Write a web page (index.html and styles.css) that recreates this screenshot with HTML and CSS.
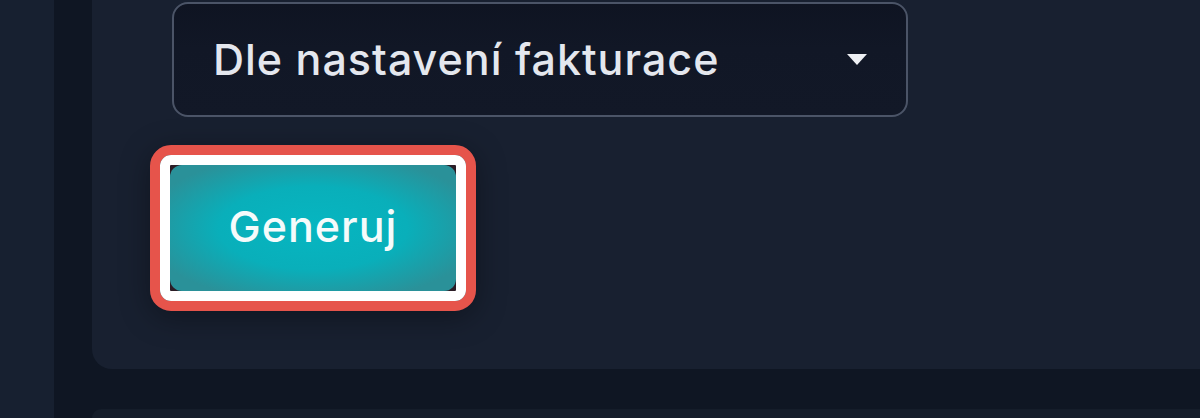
FILE: index.html
```html
<!DOCTYPE html>
<html lang="cs">
<head>
<meta charset="utf-8">
<title>Generuj</title>
<link rel="stylesheet" href="styles.css">
</head>
<body>
<div class="layout">
  <aside class="sidebar"></aside>
  <main class="main">
    <section class="card">
      <div class="select">
        <span class="select-value">Dle nastavení fakturace</span>
        <span class="caret"></span>
      </div>
      <div class="highlight">
        <div class="highlight-inner">
          <button class="btn-generate" type="button">Generuj</button>
        </div>
      </div>
    </section>
    <section class="card card-next"></section>
  </main>
</div>
</body>
</html>
```

FILE: styles.css
```css
* { box-sizing: border-box; }
html, body { margin: 0; padding: 0; height: 100%; }
body {
  background: #0f1623;
  font-family: Inter, "Noto Sans", "Liberation Sans", sans-serif;
  overflow: hidden;
}
.layout {
  display: flex;
  height: 418px;
}
.sidebar {
  width: 54px;
  flex: 0 0 54px;
  background: #172030;
}
.main {
  flex: 1;
  display: flex;
  flex-direction: column;
  gap: 40px;
  padding-left: 38px;
  background: #0f1623;
}
.card {
  background: #182030;
  border-radius: 0 0 0 20px;
  padding: 2px 0 58px 80px;
  display: flex;
  flex-direction: column;
  align-items: flex-start;
  gap: 28px;
}
.card-next {
  flex: 1;
  background: #151d2a;
  border-radius: 20px 0 0 0;
  padding: 0;
}
.select {
  width: 736px;
  height: 115px;
  border: 2px solid #4b5467;
  border-radius: 16px;
  background: linear-gradient(180deg, #0f1422 0%, #111726 40%, #121827 100%);
  display: flex;
  align-items: center;
  justify-content: space-between;
  padding: 0 39px 2px 39px;
}
.select-value {
  color: #e4e7ee;
  font-size: 43px;
  font-weight: 500;
  letter-spacing: 1px;
}
.caret {
  width: 0;
  height: 0;
  border-left: 10px solid transparent;
  border-right: 10px solid transparent;
  border-top: 11px solid #eef0f4;
  margin-top: 2px;
}
.highlight {
  margin-left: -22px;
  border: 10px solid #e6544b;
  border-radius: 21px;
  box-shadow: 0 6px 30px rgba(0, 0, 0, 0.35);
}
.highlight-inner {
  border: 10px solid #ffffff;
  border-radius: 11px;
  background: #2b1d26;
}
.btn-generate {
  display: block;
  width: 286px;
  height: 126px;
  border: 0;
  border-radius: 12px;
  background: radial-gradient(ellipse 60% 60% at 50% 50%, #06b6c1 0%, #09afba 55%, #2a9199 100%);
  color: #f5fbfb;
  font-family: inherit;
  font-size: 43px;
  font-weight: 500;
  letter-spacing: 1px;
  padding: 0 0 4px;
  cursor: pointer;
}
```
